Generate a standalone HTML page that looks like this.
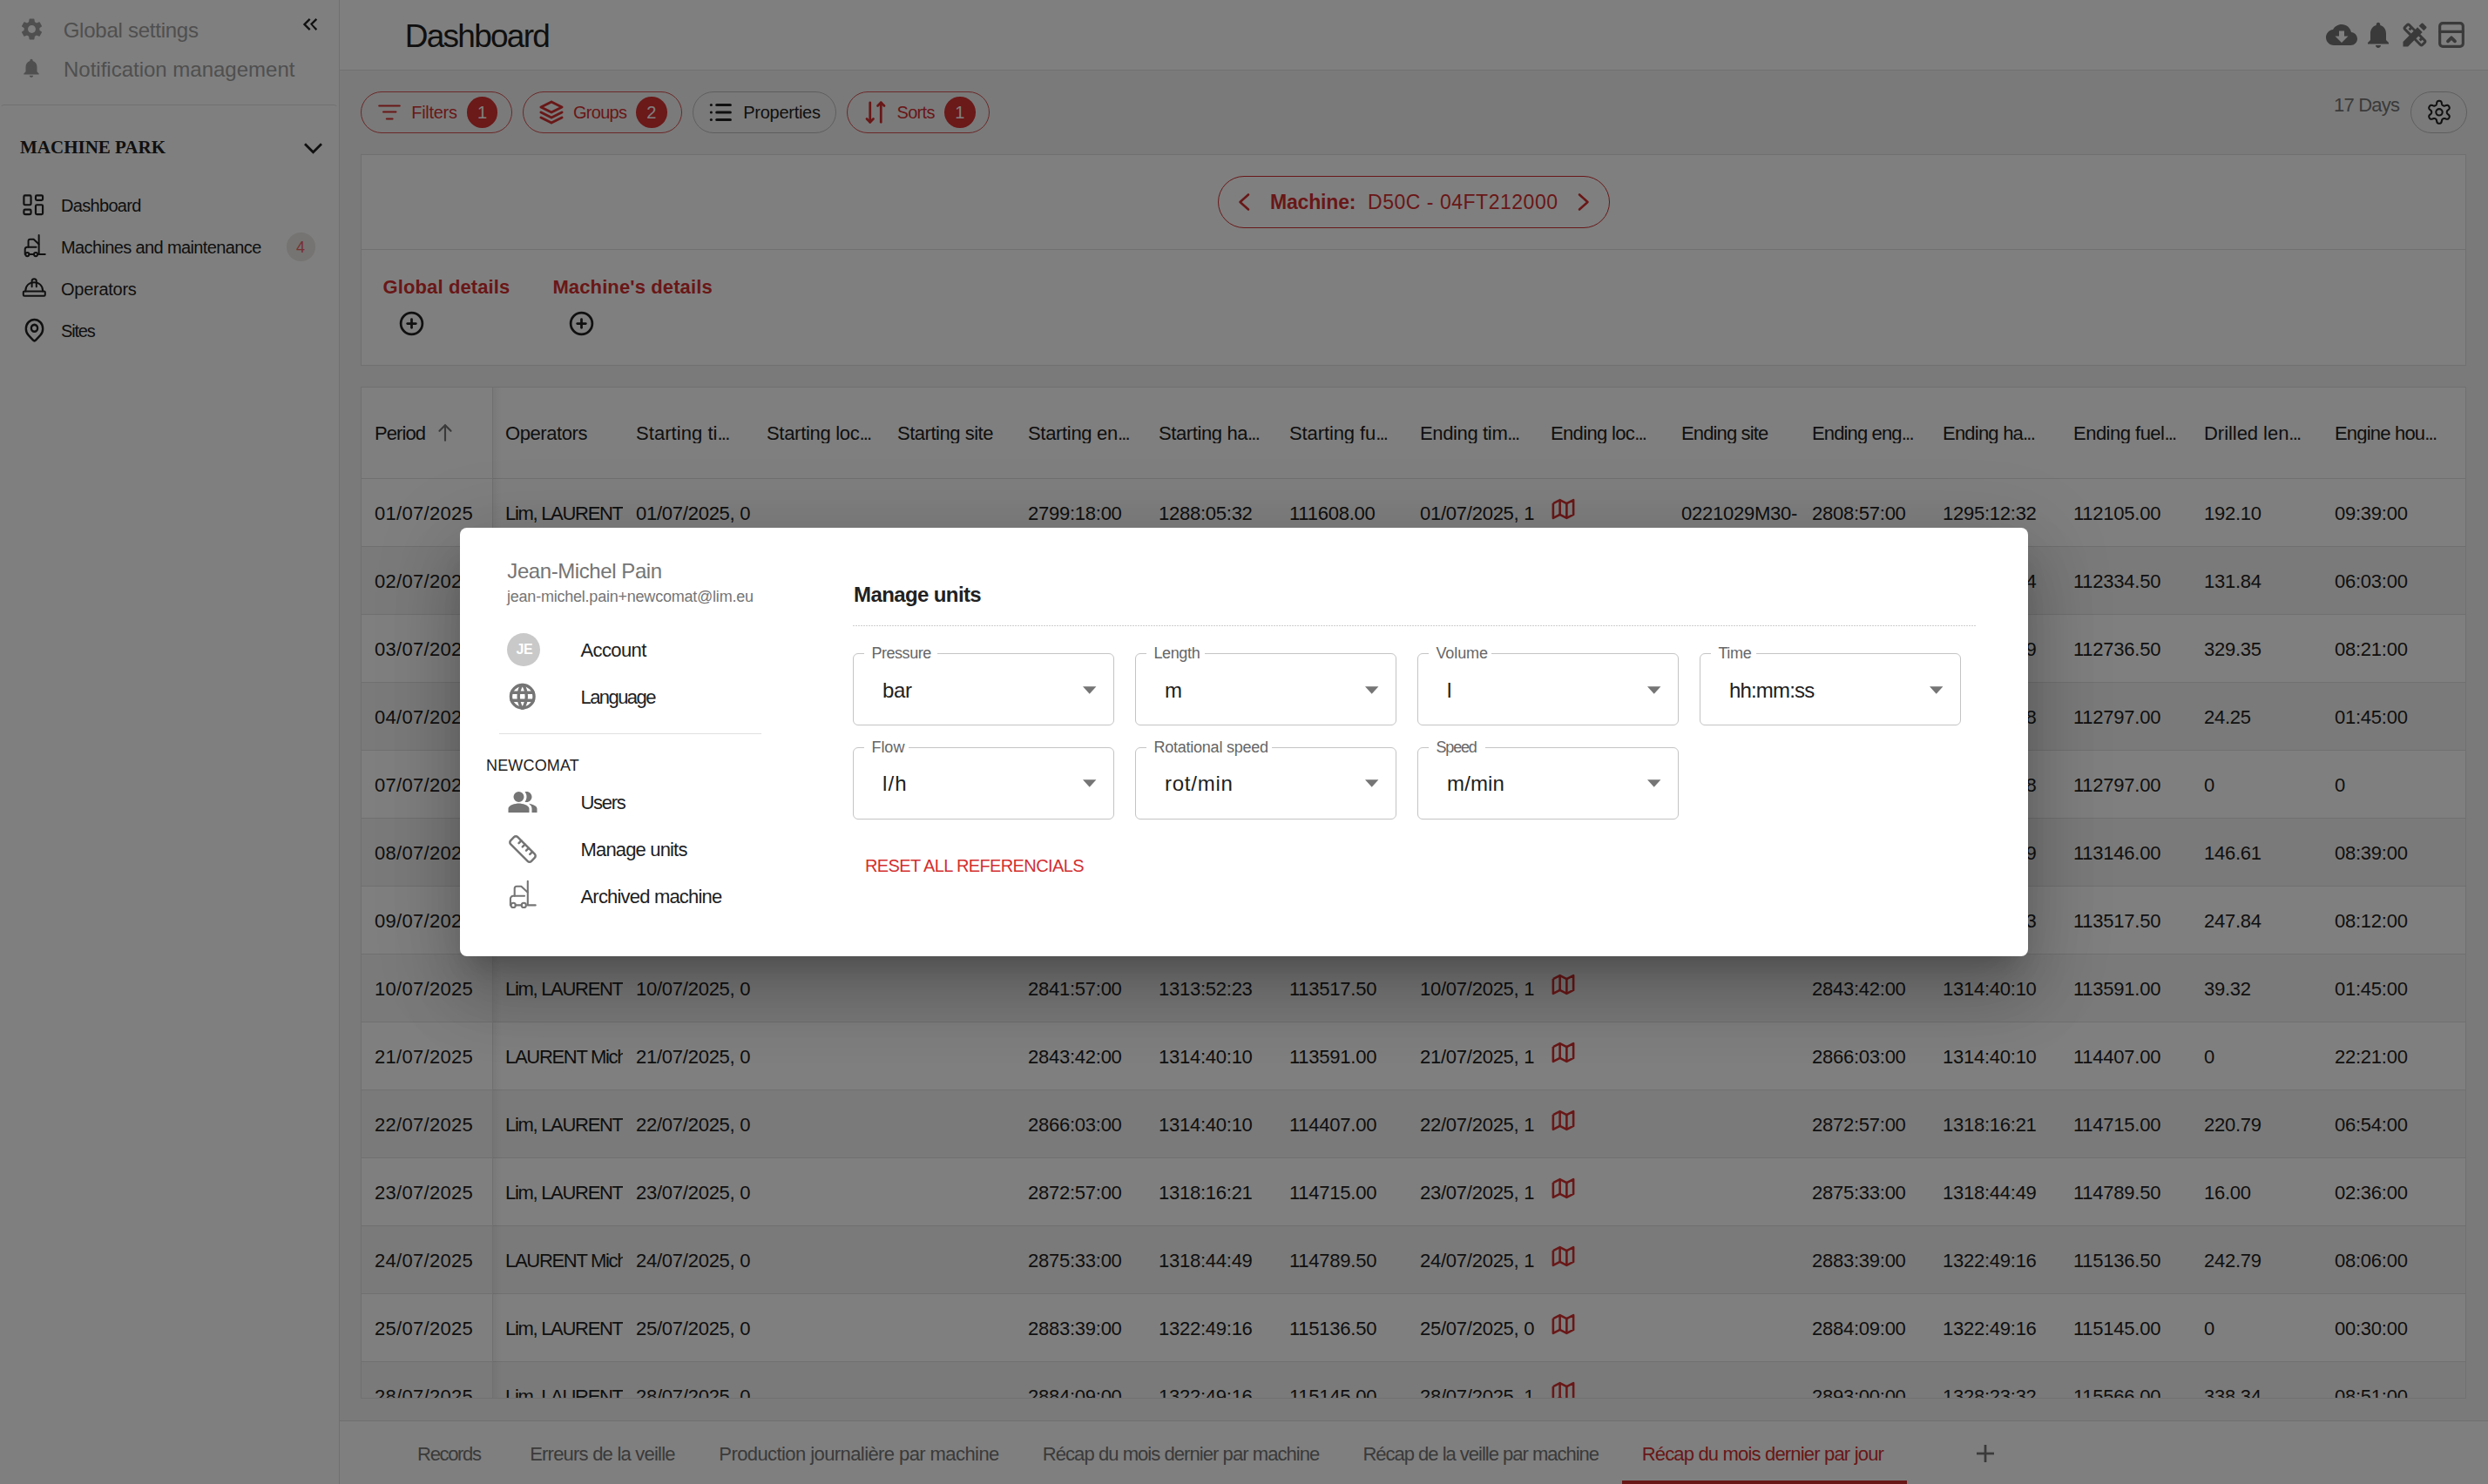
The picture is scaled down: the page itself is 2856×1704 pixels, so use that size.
<!DOCTYPE html>
<html><head><meta charset="utf-8"><title>Dashboard</title>
<style>
html,body{margin:0;padding:0;width:2856px;height:1704px;overflow:hidden;background:#f5f5f5}
body{font-family:"Liberation Sans",sans-serif;}
#root{position:relative;width:2856px;height:1704px;overflow:hidden}
#root div{position:absolute;white-space:nowrap;line-height:1}
#root svg{position:absolute}
</style></head><body><div id="root">
<div style="left:0.0px;top:0.0px;width:2856.0px;height:1704.0px;background:#f5f5f5"></div>
<div style="left:0.0px;top:0.0px;width:389.0px;height:1704.0px;background:#fff"></div>
<div style="left:389.0px;top:0.0px;width:1.0px;height:1704.0px;background:#e0e0e0"></div>
<div style="left:390.0px;top:0.0px;width:2466.0px;height:80.0px;background:#fff"></div>
<div style="left:390.0px;top:80.0px;width:2466.0px;height:1.0px;background:#e0e0e0"></div>
<svg style="position:absolute;left:22.5px;top:19.5px;width:27.0px;height:27.0px;" viewBox="0 0 24 24" ><path fill="#9e9e9e" d="M19.14 12.94c.04-.3.06-.61.06-.94 0-.32-.02-.64-.07-.94l2.03-1.58c.18-.14.23-.41.12-.61l-1.92-3.32c-.12-.22-.37-.29-.59-.22l-2.39.96c-.5-.38-1.03-.7-1.62-.94l-.36-2.54c-.04-.24-.24-.41-.48-.41h-3.84c-.24 0-.43.17-.47.41l-.36 2.54c-.59.24-1.13.57-1.62.94l-2.39-.96c-.22-.08-.47 0-.59.22L2.74 8.87c-.12.21-.08.47.12.61l2.03 1.58c-.05.3-.09.63-.09.94s.02.64.07.94l-2.03 1.58c-.18.14-.23.41-.12.61l1.92 3.32c.12.22.37.29.59.22l2.39-.96c.5.38 1.03.7 1.62.94l.36 2.54c.05.24.24.41.48.41h3.84c.24 0 .44-.17.47-.41l.36-2.54c.59-.24 1.13-.56 1.62-.94l2.39.96c.22.08.47 0 .59-.22l1.92-3.32c.12-.22.07-.47-.12-.61l-2.01-1.58zM12 15.6c-1.98 0-3.6-1.62-3.6-3.6s1.62-3.6 3.6-3.6 3.6 1.62 3.6 3.6-1.62 3.6-3.6 3.6z" transform="translate(-1.2 -1.2) scale(1.1)"/></svg>
<div style="left:72.7px;top:22.7px;font-size:24px;color:#9e9e9e;letter-spacing:-0.248px">Global settings</div>
<svg style="position:absolute;left:23.0px;top:65.0px;width:26.0px;height:26.0px;" viewBox="0 0 24 24" ><path fill="#9e9e9e" d="M12 22c1.1 0 2-.9 2-2h-4c0 1.1.89 2 2 2zm6-6v-5c0-3.07-1.64-5.64-4.5-6.32V4c0-.83-.67-1.5-1.5-1.5s-1.5.67-1.5 1.5v.68C7.63 5.36 6 7.92 6 11v5l-2 2v1h16v-1l-2-2z"/></svg>
<div style="left:73.0px;top:67.7px;font-size:24px;color:#9e9e9e;letter-spacing:-0.004px">Notification management</div>
<svg style="position:absolute;left:341.5px;top:14.0px;width:28.0px;height:28.0px;" viewBox="0 0 24 24" ><path fill="#212121" d="M17.59 18L19 16.59 14.42 12 19 7.41 17.59 6 12 11.59z M11 18l1.41-1.41L7.83 12l4.58-4.59L11 6l-6 6z"/></svg>
<div style="left:0.0px;top:120.0px;width:388.0px;height:60.0px;border:1px solid transparent;border-top-color:#e0e0e0;border-radius:5px 5px 0 0;box-sizing:border-box"></div>
<div style="left:23.0px;top:159.4px;font-size:21px;color:#212121;font-weight:700;font-family:'Liberation Serif',serif">MACHINE PARK</div>
<svg style="position:absolute;left:346.0px;top:156.0px;width:27.0px;height:27.0px;" viewBox="0 0 27 27" ><path fill="none" stroke="#212121" stroke-width="2.8" d="M4 9.2l9.5 9.5 9.5-9.5"/></svg>
<svg style="position:absolute;left:22.2px;top:218.5px;width:32.5px;height:32.5px;" viewBox="0 0 24 24" ><g fill="none" stroke="#212121" stroke-width="1.6" stroke-linecap="round" stroke-linejoin="round"><path d="M5 4h4a1 1 0 0 1 1 1v6a1 1 0 0 1 -1 1h-4a1 1 0 0 1 -1 -1v-6a1 1 0 0 1 1 -1"/><path d="M5 16h4a1 1 0 0 1 1 1v2a1 1 0 0 1 -1 1h-4a1 1 0 0 1 -1 -1v-2a1 1 0 0 1 1 -1"/><path d="M15 12h4a1 1 0 0 1 1 1v6a1 1 0 0 1 -1 1h-4a1 1 0 0 1 -1 -1v-6a1 1 0 0 1 1 -1"/><path d="M15 4h4a1 1 0 0 1 1 1v2a1 1 0 0 1 -1 1h-4a1 1 0 0 1 -1 -1v-2a1 1 0 0 1 1 -1"/></g></svg>
<div style="left:70.0px;top:226.1px;font-size:20px;color:#212121;letter-spacing:-0.680px">Dashboard</div>
<svg style="position:absolute;left:23.5px;top:266.6px;width:32.0px;height:32.0px;" viewBox="0 0 40 40" ><g fill="none" stroke="#212121" stroke-width="2.5" stroke-linecap="round" stroke-linejoin="round"><path d="M25.8 3.7V31.4H34.7"/><circle cx="9.2" cy="31.4" r="2.6"/><circle cx="21.3" cy="31.4" r="2.6"/><path d="M11.8 31.4H18.7"/><path d="M5.9 31.4V24a3.2 3.2 0 0 1 3.2 -3.2H22"/><path d="M10.7 20.8V12.2a2.5 2.5 0 0 1 2.5 -2.5H18.3L25.6 16.5"/></g></svg>
<div style="left:70.0px;top:274.1px;font-size:20px;color:#212121;letter-spacing:-0.622px">Machines and maintenance</div>
<div style="left:329.2px;top:267.2px;width:32.5px;height:32.5px;background:#ebe8e4;border-radius:50%"></div>
<div style="left:340.0px;top:274.8px;font-size:18px;color:#f06060">4</div>
<svg style="position:absolute;left:24.0px;top:314.0px;width:30.0px;height:30.0px;" viewBox="0 0 30 30" ><g fill="none" stroke="#212121" stroke-width="2" stroke-linecap="round" stroke-linejoin="round"><rect x="2.8" y="20.4" width="25" height="5.4" rx="1.2"/><path d="M5.2 20.4C5.2 14 9.5 10.2 15.2 10.2C20.9 10.2 25.2 14 25.2 20.4"/><path d="M12.6 15.2V8.8a2.6 2.6 0 0 1 5.2 0V15.2"/></g></svg>
<div style="left:70.0px;top:321.7px;font-size:20px;color:#212121;letter-spacing:-0.267px">Operators</div>
<svg style="position:absolute;left:24.5px;top:363.0px;width:29.0px;height:31.5px;" viewBox="0 0 24 24" preserveAspectRatio="none"><g fill="none" stroke="#212121" stroke-width="2" stroke-linecap="round" stroke-linejoin="round"><path d="M9 10.5a3 3 0 1 0 6 0a3 3 0 0 0 -6 0"/><path d="M17.657 16.157l-4.243 4.243a2 2 0 0 1 -2.827 0l-4.244 -4.243a8 8 0 1 1 11.314 0z" transform="translate(0 0.5)"/></g></svg>
<div style="left:70.0px;top:369.6px;font-size:20px;color:#212121;letter-spacing:-1.167px">Sites</div>
<div style="left:464.8px;top:23.0px;font-size:37px;color:#212121;letter-spacing:-1.752px">Dashboard</div>
<svg style="position:absolute;left:2670.0px;top:22.0px;width:36.0px;height:36.0px;" viewBox="0 0 24 24" ><path fill="#757575" d="M19.35 10.04C18.67 6.59 15.64 4 12 4 9.11 4 6.6 5.64 5.35 8.04 2.34 8.36 0 10.91 0 14c0 3.31 2.69 6 6 6h13c2.76 0 5-2.24 5-5 0-2.64-2.05-4.78-4.65-4.96zM17 13l-5 5-5-5h3V9h4v4h3z"/></svg>
<svg style="position:absolute;left:2712.0px;top:22.0px;width:36.0px;height:36.0px;" viewBox="0 0 24 24" ><path fill="#757575" d="M12 22c1.1 0 2-.9 2-2h-4c0 1.1.89 2 2 2zm6-6v-5c0-3.07-1.64-5.64-4.5-6.32V4c0-.83-.67-1.5-1.5-1.5s-1.5.67-1.5 1.5v.68C7.63 5.36 6 7.92 6 11v5l-2 2v1h16v-1l-2-2z"/></svg>
<svg style="position:absolute;left:2753.6px;top:22.0px;width:36.0px;height:36.0px;" viewBox="0 0 24 24" ><path fill="#757575" d="M16.24 11.51l1.57-1.57-3.75-3.75-1.57 1.57-4.14-4.13c-.78-.78-2.05-.78-2.83 0l-1.9 1.9c-.78.78-.78 2.05 0 2.83l4.13 4.13L3 17.25V21h3.75l4.76-4.76 4.13 4.13c.95.95 2.23.6 2.83 0l1.9-1.9c.78-.78.78-2.05 0-2.83l-4.13-4.13zm-7.06-.44L5.04 6.94l1.89-1.9L8.2 6.31 7.02 7.5l1.41 1.41 1.19-1.19 1.45 1.45-1.89 1.9zm7.88 7.89l-4.13-4.14 1.9-1.9 1.45 1.45-1.19 1.19 1.41 1.41 1.19-1.19 1.27 1.27-1.9 1.91zM20.71 7.04c.39-.39.39-1.02 0-1.41l-2.34-2.34c-.47-.47-1.12-.29-1.41 0l-1.83 1.83 3.75 3.75 1.83-1.83z"/></svg>
<svg style="position:absolute;left:2794.0px;top:20.0px;width:40.0px;height:40.0px;" viewBox="0 0 24 24" ><g fill="none" stroke="#757575" stroke-width="1.9" stroke-linecap="round" stroke-linejoin="round"><path d="M4 6a2 2 0 0 1 2 -2h12a2 2 0 0 1 2 2v12a2 2 0 0 1 -2 2h-12a2 2 0 0 1 -2 -2z"/><path d="M4 9.8h16"/><path d="M9.6 16.4l2.4 -2.4l2.4 2.4" stroke-width="2.3"/></g></svg>
<div style="left:414.0px;top:105.3px;width:174.0px;height:47.4px;border:1px solid #d65050;border-radius:24px;box-sizing:border-box"></div>
<div style="left:472.3px;top:118.9px;font-size:20px;color:#d32f2f;letter-spacing:-0.292px">Filters</div>
<div style="left:535.8px;top:111.0px;width:35.5px;height:35.5px;background:#d63333;border-radius:50%"></div>
<div style="left:548.0px;top:118.9px;font-size:20px;color:#fff">1</div>
<svg style="position:absolute;left:430.0px;top:112.0px;width:34.0px;height:34.0px;" viewBox="0 0 34 34" ><g fill="none" stroke="#d32f2f" stroke-width="2" stroke-linecap="round"><path d="M5.2 9.4H28.8"/><path d="M10 16.6H24.5"/><path d="M13.8 24.4H20.6"/></g></svg>
<div style="left:600.0px;top:105.3px;width:183.0px;height:47.4px;border:1px solid #d65050;border-radius:24px;box-sizing:border-box"></div>
<div style="left:658.0px;top:118.9px;font-size:20px;color:#d32f2f;letter-spacing:-0.719px">Groups</div>
<div style="left:730.0px;top:111.0px;width:35.5px;height:35.5px;background:#d63333;border-radius:50%"></div>
<div style="left:742.2px;top:118.9px;font-size:20px;color:#fff">2</div>
<svg style="position:absolute;left:615.0px;top:111.0px;width:36.0px;height:36.0px;" viewBox="0 0 24 24" ><g fill="none" stroke="#d32f2f" stroke-width="2" stroke-linecap="round" stroke-linejoin="round"><path d="M12 4l-8 4l8 4l8 -4l-8 -4"/><path d="M4 12l8 4l8 -4"/><path d="M4 16l8 4l8 -4"/></g></svg>
<div style="left:795.0px;top:105.3px;width:165.0px;height:47.4px;border:1px solid #bdbdbd;border-radius:24px;box-sizing:border-box"></div>
<div style="left:853.2px;top:118.9px;font-size:20px;color:#212121;letter-spacing:-0.262px">Properties</div>
<svg style="position:absolute;left:810.0px;top:111.0px;width:34.0px;height:36.0px;" viewBox="0 0 24 24" ><g fill="none" stroke="#212121" stroke-width="2.2" stroke-linecap="round" stroke-linejoin="round"><path d="M9 6h11"/><path d="M9 12h11"/><path d="M9 18h11"/><path d="M4.5 6v.01"/><path d="M4.5 12v.01"/><path d="M4.5 18v.01"/></g></svg>
<div style="left:972.0px;top:105.3px;width:164.0px;height:47.4px;border:1px solid #d65050;border-radius:24px;box-sizing:border-box"></div>
<div style="left:1029.5px;top:118.9px;font-size:20px;color:#d32f2f;letter-spacing:-0.697px">Sorts</div>
<div style="left:1084.0px;top:111.0px;width:35.5px;height:35.5px;background:#d63333;border-radius:50%"></div>
<div style="left:1096.2px;top:118.9px;font-size:20px;color:#fff">1</div>
<svg style="position:absolute;left:989.0px;top:114.0px;width:32.0px;height:30.0px;" viewBox="0 0 24 24" ><g fill="none" stroke="#d32f2f" stroke-width="2.2" stroke-linecap="round" stroke-linejoin="round"><path d="M17 3v18"/><path d="M10 18l-3 3l-3 -3"/><path d="M7 21v-18"/><path d="M20 6l-3 -3l-3 3"/></g></svg>
<div style="left:2679.0px;top:110.4px;font-size:22px;color:#757575;letter-spacing:-0.786px">17 Days</div>
<div style="left:2767.0px;top:105.0px;width:65.0px;height:48.0px;border:1px solid #bdbdbd;border-radius:24px;box-sizing:border-box"></div>
<svg style="position:absolute;left:2780.0px;top:108.0px;width:40.0px;height:40.0px;" viewBox="0 0 40 40" ><g fill="none" stroke="#212121" stroke-width="2.1" stroke-linejoin="round"><path d="M28.80 20.80 L28.80 21.03 L28.82 21.26 L28.84 21.50 L28.89 21.73 L28.97 21.98 L29.11 22.24 L29.33 22.53 L29.64 22.85 L30.06 23.21 L30.53 23.62 L30.99 24.05 L31.36 24.49 L31.61 24.91 L31.74 25.31 L31.78 25.68 L31.75 26.03 L31.67 26.37 L31.56 26.69 L31.42 27.00 L31.26 27.30 L31.08 27.59 L30.88 27.86 L30.66 28.12 L30.40 28.36 L30.11 28.56 L29.77 28.71 L29.36 28.80 L28.88 28.79 L28.31 28.69 L27.71 28.51 L27.12 28.30 L26.60 28.13 L26.16 28.01 L25.81 27.97 L25.51 27.98 L25.25 28.03 L25.02 28.11 L24.81 28.20 L24.60 28.31 L24.40 28.42 L24.20 28.54 L24.01 28.67 L23.82 28.81 L23.64 28.97 L23.46 29.16 L23.31 29.41 L23.17 29.74 L23.05 30.17 L22.94 30.72 L22.82 31.33 L22.67 31.94 L22.48 32.48 L22.24 32.91 L21.97 33.22 L21.66 33.44 L21.34 33.59 L21.01 33.69 L20.68 33.75 L20.34 33.79 L20.00 33.80 L19.66 33.79 L19.32 33.75 L18.99 33.69 L18.66 33.59 L18.34 33.44 L18.03 33.22 L17.76 32.91 L17.52 32.48 L17.33 31.94 L17.18 31.33 L17.06 30.72 L16.95 30.17 L16.83 29.74 L16.69 29.41 L16.54 29.16 L16.36 28.97 L16.18 28.81 L15.99 28.67 L15.80 28.54 L15.60 28.42 L15.40 28.31 L15.19 28.20 L14.98 28.11 L14.75 28.03 L14.49 27.98 L14.19 27.97 L13.84 28.01 L13.40 28.13 L12.88 28.30 L12.29 28.51 L11.69 28.69 L11.12 28.79 L10.64 28.80 L10.23 28.71 L9.89 28.56 L9.60 28.36 L9.34 28.12 L9.12 27.86 L8.92 27.59 L8.74 27.30 L8.58 27.00 L8.44 26.69 L8.33 26.37 L8.25 26.03 L8.22 25.68 L8.26 25.31 L8.39 24.91 L8.64 24.49 L9.01 24.05 L9.47 23.62 L9.94 23.21 L10.36 22.85 L10.67 22.53 L10.89 22.24 L11.03 21.98 L11.11 21.73 L11.16 21.50 L11.18 21.26 L11.20 21.03 L11.20 20.80 L11.20 20.57 L11.18 20.34 L11.16 20.10 L11.11 19.87 L11.03 19.62 L10.89 19.36 L10.67 19.07 L10.36 18.75 L9.94 18.39 L9.47 17.98 L9.01 17.55 L8.64 17.11 L8.39 16.69 L8.26 16.29 L8.22 15.92 L8.25 15.57 L8.33 15.23 L8.44 14.91 L8.58 14.60 L8.74 14.30 L8.92 14.01 L9.12 13.74 L9.34 13.48 L9.60 13.24 L9.89 13.04 L10.23 12.89 L10.64 12.80 L11.12 12.81 L11.69 12.91 L12.29 13.09 L12.88 13.30 L13.40 13.47 L13.84 13.59 L14.19 13.63 L14.49 13.62 L14.75 13.57 L14.98 13.49 L15.19 13.40 L15.40 13.29 L15.60 13.18 L15.80 13.06 L15.99 12.93 L16.18 12.79 L16.36 12.63 L16.54 12.44 L16.69 12.19 L16.83 11.86 L16.95 11.43 L17.06 10.88 L17.18 10.27 L17.33 9.66 L17.52 9.12 L17.76 8.69 L18.03 8.38 L18.34 8.16 L18.66 8.01 L18.99 7.91 L19.32 7.85 L19.66 7.81 L20.00 7.80 L20.34 7.81 L20.68 7.85 L21.01 7.91 L21.34 8.01 L21.66 8.16 L21.97 8.38 L22.24 8.69 L22.48 9.12 L22.67 9.66 L22.82 10.27 L22.94 10.88 L23.05 11.43 L23.17 11.86 L23.31 12.19 L23.46 12.44 L23.64 12.63 L23.82 12.79 L24.01 12.93 L24.20 13.06 L24.40 13.18 L24.60 13.29 L24.81 13.40 L25.02 13.49 L25.25 13.57 L25.51 13.62 L25.81 13.63 L26.16 13.59 L26.60 13.47 L27.12 13.30 L27.71 13.09 L28.31 12.91 L28.88 12.81 L29.36 12.80 L29.77 12.89 L30.11 13.04 L30.40 13.24 L30.66 13.48 L30.88 13.74 L31.08 14.01 L31.26 14.30 L31.42 14.60 L31.56 14.91 L31.67 15.23 L31.75 15.57 L31.78 15.92 L31.74 16.29 L31.61 16.69 L31.36 17.11 L30.99 17.55 L30.53 17.98 L30.06 18.39 L29.64 18.75 L29.33 19.07 L29.11 19.36 L28.97 19.62 L28.89 19.87 L28.84 20.10 L28.82 20.34 L28.80 20.57Z"/><circle cx="20" cy="20.8" r="3.7"/></g></svg>
<div style="left:414.0px;top:177.0px;width:2417.0px;height:243.0px;background:#fff;border:1px solid #e0e0e0;box-sizing:border-box"></div>
<div style="left:415.0px;top:286.0px;width:2415.0px;height:1.0px;background:#e0e0e0"></div>
<div style="left:1398.0px;top:202.0px;width:450.0px;height:60.0px;border:1.5px solid #d32f2f;border-radius:30px;box-sizing:border-box"></div>
<svg style="position:absolute;left:1410.0px;top:210.0px;width:36.0px;height:44.0px;" viewBox="0 0 36 44" ><path fill="none" stroke="#d32f2f" stroke-width="2.6" stroke-linecap="round" stroke-linejoin="round" d="M23 13.5L13.5 22L23 30.5"/></svg>
<svg style="position:absolute;left:1800.0px;top:210.0px;width:36.0px;height:44.0px;" viewBox="0 0 36 44" ><path fill="none" stroke="#d32f2f" stroke-width="2.6" stroke-linecap="round" stroke-linejoin="round" d="M13 13.5L22.5 22L13 30.5"/></svg>
<div style="left:1458.0px;top:220.5px;font-size:23px;color:#d32f2f;font-weight:700;letter-spacing:-0.184px">Machine:</div>
<div style="left:1570.0px;top:220.5px;font-size:23px;color:#d32f2f;letter-spacing:0.520px">D50C - 04FT212000</div>
<div style="left:439.6px;top:318.6px;font-size:22px;color:#d32f2f;font-weight:700;letter-spacing:0.103px">Global details</div>
<div style="left:634.4px;top:318.6px;font-size:22px;color:#d32f2f;font-weight:700;letter-spacing:0.125px">Machine's details</div>
<svg style="position:absolute;left:455.5px;top:354.5px;width:33.0px;height:33.0px;" viewBox="0 0 24 24" ><g fill="none" stroke="#212121" stroke-width="2" stroke-linecap="round"><circle cx="12" cy="12" r="9"/><path d="M8.5 12h7"/><path d="M12 8.5v7"/></g></svg>
<svg style="position:absolute;left:650.5px;top:354.5px;width:33.0px;height:33.0px;" viewBox="0 0 24 24" ><g fill="none" stroke="#212121" stroke-width="2" stroke-linecap="round"><circle cx="12" cy="12" r="9"/><path d="M8.5 12h7"/><path d="M12 8.5v7"/></g></svg>
<div style="left:414px;top:444px;width:2417px;height:1162px;background:#fff;border:1px solid #e0e0e0;box-sizing:border-box;overflow:hidden">
<div style="left:0px;top:104px;width:2417px;height:78px;background:#fff;border-top:1px solid #e0e0e0;box-sizing:border-box"></div>
<div style="left:0px;top:182px;width:2417px;height:78px;background:#f5f5f5;border-top:1px solid #e0e0e0;box-sizing:border-box"></div>
<div style="left:0px;top:260px;width:2417px;height:78px;background:#fff;border-top:1px solid #e0e0e0;box-sizing:border-box"></div>
<div style="left:0px;top:338px;width:2417px;height:78px;background:#f5f5f5;border-top:1px solid #e0e0e0;box-sizing:border-box"></div>
<div style="left:0px;top:416px;width:2417px;height:78px;background:#fff;border-top:1px solid #e0e0e0;box-sizing:border-box"></div>
<div style="left:0px;top:494px;width:2417px;height:78px;background:#f5f5f5;border-top:1px solid #e0e0e0;box-sizing:border-box"></div>
<div style="left:0px;top:572px;width:2417px;height:78px;background:#fff;border-top:1px solid #e0e0e0;box-sizing:border-box"></div>
<div style="left:0px;top:650px;width:2417px;height:78px;background:#f5f5f5;border-top:1px solid #e0e0e0;box-sizing:border-box"></div>
<div style="left:0px;top:728px;width:2417px;height:78px;background:#fff;border-top:1px solid #e0e0e0;box-sizing:border-box"></div>
<div style="left:0px;top:806px;width:2417px;height:78px;background:#f5f5f5;border-top:1px solid #e0e0e0;box-sizing:border-box"></div>
<div style="left:0px;top:884px;width:2417px;height:78px;background:#fff;border-top:1px solid #e0e0e0;box-sizing:border-box"></div>
<div style="left:0px;top:962px;width:2417px;height:78px;background:#f5f5f5;border-top:1px solid #e0e0e0;box-sizing:border-box"></div>
<div style="left:0px;top:1040px;width:2417px;height:78px;background:#fff;border-top:1px solid #e0e0e0;box-sizing:border-box"></div>
<div style="left:0px;top:1118px;width:2417px;height:78px;background:#f5f5f5;border-top:1px solid #e0e0e0;box-sizing:border-box"></div>
<div style="left:15px;top:42.4px;width:135px;font-size:22px;color:#212121;overflow:hidden;letter-spacing:-0.899px">Period</div>
<div style="left:165px;top:42.4px;width:135px;font-size:22px;color:#212121;overflow:hidden;letter-spacing:-0.416px">Operators</div>
<div style="left:315px;top:42.4px;width:135px;font-size:22px;color:#212121;overflow:hidden;letter-spacing:0.057px">Starting ti<span style="letter-spacing:-1.8px">...</span></div>
<div style="left:465px;top:42.4px;width:135px;font-size:22px;color:#212121;overflow:hidden;letter-spacing:-0.300px">Starting loc<span style="letter-spacing:-1.8px">...</span></div>
<div style="left:615px;top:42.4px;width:135px;font-size:22px;color:#212121;overflow:hidden;letter-spacing:-0.473px">Starting site</div>
<div style="left:765px;top:42.4px;width:135px;font-size:22px;color:#212121;overflow:hidden;letter-spacing:-0.322px">Starting en<span style="letter-spacing:-1.8px">...</span></div>
<div style="left:915px;top:42.4px;width:135px;font-size:22px;color:#212121;overflow:hidden;letter-spacing:-0.395px">Starting ha<span style="letter-spacing:-1.8px">...</span></div>
<div style="left:1065px;top:42.4px;width:135px;font-size:22px;color:#212121;overflow:hidden;letter-spacing:-0.102px">Starting fu<span style="letter-spacing:-1.8px">...</span></div>
<div style="left:1215px;top:42.4px;width:135px;font-size:22px;color:#212121;overflow:hidden;letter-spacing:-0.359px">Ending tim<span style="letter-spacing:-1.8px">...</span></div>
<div style="left:1365px;top:42.4px;width:135px;font-size:22px;color:#212121;overflow:hidden;letter-spacing:-0.659px">Ending loc<span style="letter-spacing:-1.8px">...</span></div>
<div style="left:1515px;top:42.4px;width:135px;font-size:22px;color:#212121;overflow:hidden;letter-spacing:-0.866px">Ending site</div>
<div style="left:1665px;top:42.4px;width:135px;font-size:22px;color:#212121;overflow:hidden;letter-spacing:-0.857px">Ending eng<span style="letter-spacing:-1.8px">...</span></div>
<div style="left:1815px;top:42.4px;width:135px;font-size:22px;color:#212121;overflow:hidden;letter-spacing:-0.781px">Ending ha<span style="letter-spacing:-1.8px">...</span></div>
<div style="left:1965px;top:42.4px;width:135px;font-size:22px;color:#212121;overflow:hidden;letter-spacing:-0.512px">Ending fuel<span style="letter-spacing:-1.8px">...</span></div>
<div style="left:2115px;top:42.4px;width:135px;font-size:22px;color:#212121;overflow:hidden;letter-spacing:-0.042px">Drilled len<span style="letter-spacing:-1.8px">...</span></div>
<div style="left:2265px;top:42.4px;width:135px;font-size:22px;color:#212121;overflow:hidden;letter-spacing:-0.807px">Engine hou<span style="letter-spacing:-1.8px">...</span></div>
<svg style="position:absolute;left:83px;top:39px;width:26px;height:26px" viewBox="0 0 24 24"><g fill="none" stroke="#757575" stroke-width="2" stroke-linecap="round" stroke-linejoin="round"><path d="M12 20V4"/><path d="M6 10l6-6 6 6"/></g></svg>
<div style="left:15px;top:133.7px;width:135px;font-size:22px;color:#212121;overflow:hidden;letter-spacing:0.300px">01/07/2025</div>
<div style="left:165px;top:133.7px;width:135px;font-size:22px;color:#212121;overflow:hidden;letter-spacing:-1.300px">Lim, LAURENT</div>
<div style="left:315px;top:133.7px;width:135px;font-size:22px;color:#212121;overflow:hidden;letter-spacing:-0.250px">01/07/2025, 0</div>
<div style="left:765px;top:133.7px;width:135px;font-size:22px;color:#212121;overflow:hidden;letter-spacing:-0.250px">2799:18:00</div>
<div style="left:915px;top:133.7px;width:135px;font-size:22px;color:#212121;overflow:hidden;letter-spacing:-0.250px">1288:05:32</div>
<div style="left:1065px;top:133.7px;width:135px;font-size:22px;color:#212121;overflow:hidden;letter-spacing:-0.250px">111608.00</div>
<div style="left:1215px;top:133.7px;width:135px;font-size:22px;color:#212121;overflow:hidden;letter-spacing:-0.250px">01/07/2025, 1</div>
<svg style="position:absolute;left:1364px;top:124px;width:31px;height:31px" viewBox="0 0 24 24"><g fill="none" stroke="#d32f2f" stroke-width="2" stroke-linejoin="round"><path d="M3 7l6 -3l6 3l6 -3v13l-6 3l-6 -3l-6 3v-13"/><path d="M9 4v13"/><path d="M15 7v13"/></g></svg>
<div style="left:1515px;top:133.7px;width:135px;font-size:22px;color:#212121;overflow:hidden;letter-spacing:-0.250px">0221029M30-</div>
<div style="left:1665px;top:133.7px;width:135px;font-size:22px;color:#212121;overflow:hidden;letter-spacing:-0.250px">2808:57:00</div>
<div style="left:1815px;top:133.7px;width:135px;font-size:22px;color:#212121;overflow:hidden;letter-spacing:-0.250px">1295:12:32</div>
<div style="left:1965px;top:133.7px;width:135px;font-size:22px;color:#212121;overflow:hidden;letter-spacing:-0.250px">112105.00</div>
<div style="left:2115px;top:133.7px;width:135px;font-size:22px;color:#212121;overflow:hidden;letter-spacing:-0.250px">192.10</div>
<div style="left:2265px;top:133.7px;width:135px;font-size:22px;color:#212121;overflow:hidden;letter-spacing:-0.250px">09:39:00</div>
<div style="left:15px;top:211.7px;width:135px;font-size:22px;color:#212121;overflow:hidden;letter-spacing:0.300px">02/07/2025</div>
<div style="left:165px;top:211.7px;width:135px;font-size:22px;color:#212121;overflow:hidden;letter-spacing:-1.300px">Lim, LAURENT</div>
<div style="left:315px;top:211.7px;width:135px;font-size:22px;color:#212121;overflow:hidden;letter-spacing:-0.250px">02/07/2025, 0</div>
<div style="left:765px;top:211.7px;width:135px;font-size:22px;color:#212121;overflow:hidden;letter-spacing:-0.250px">2808:57:00</div>
<div style="left:915px;top:211.7px;width:135px;font-size:22px;color:#212121;overflow:hidden;letter-spacing:-0.250px">1295:12:32</div>
<div style="left:1065px;top:211.7px;width:135px;font-size:22px;color:#212121;overflow:hidden;letter-spacing:-0.250px">112105.00</div>
<div style="left:1215px;top:211.7px;width:135px;font-size:22px;color:#212121;overflow:hidden;letter-spacing:-0.250px">02/07/2025, 1</div>
<svg style="position:absolute;left:1364px;top:202px;width:31px;height:31px" viewBox="0 0 24 24"><g fill="none" stroke="#d32f2f" stroke-width="2" stroke-linejoin="round"><path d="M3 7l6 -3l6 3l6 -3v13l-6 3l-6 -3l-6 3v-13"/><path d="M9 4v13"/><path d="M15 7v13"/></g></svg>
<div style="left:1665px;top:211.7px;width:135px;font-size:22px;color:#212121;overflow:hidden;letter-spacing:-0.250px">2815:00:00</div>
<div style="left:1815px;top:211.7px;width:135px;font-size:22px;color:#212121;overflow:hidden;letter-spacing:-0.250px">1299:40:44</div>
<div style="left:1965px;top:211.7px;width:135px;font-size:22px;color:#212121;overflow:hidden;letter-spacing:-0.250px">112334.50</div>
<div style="left:2115px;top:211.7px;width:135px;font-size:22px;color:#212121;overflow:hidden;letter-spacing:-0.250px">131.84</div>
<div style="left:2265px;top:211.7px;width:135px;font-size:22px;color:#212121;overflow:hidden;letter-spacing:-0.250px">06:03:00</div>
<div style="left:15px;top:289.7px;width:135px;font-size:22px;color:#212121;overflow:hidden;letter-spacing:0.300px">03/07/2025</div>
<div style="left:165px;top:289.7px;width:135px;font-size:22px;color:#212121;overflow:hidden;letter-spacing:-1.300px">Lim, LAURENT</div>
<div style="left:315px;top:289.7px;width:135px;font-size:22px;color:#212121;overflow:hidden;letter-spacing:-0.250px">03/07/2025, 0</div>
<div style="left:765px;top:289.7px;width:135px;font-size:22px;color:#212121;overflow:hidden;letter-spacing:-0.250px">2815:00:00</div>
<div style="left:915px;top:289.7px;width:135px;font-size:22px;color:#212121;overflow:hidden;letter-spacing:-0.250px">1299:40:44</div>
<div style="left:1065px;top:289.7px;width:135px;font-size:22px;color:#212121;overflow:hidden;letter-spacing:-0.250px">112334.50</div>
<div style="left:1215px;top:289.7px;width:135px;font-size:22px;color:#212121;overflow:hidden;letter-spacing:-0.250px">03/07/2025, 1</div>
<svg style="position:absolute;left:1364px;top:280px;width:31px;height:31px" viewBox="0 0 24 24"><g fill="none" stroke="#d32f2f" stroke-width="2" stroke-linejoin="round"><path d="M3 7l6 -3l6 3l6 -3v13l-6 3l-6 -3l-6 3v-13"/><path d="M9 4v13"/><path d="M15 7v13"/></g></svg>
<div style="left:1665px;top:289.7px;width:135px;font-size:22px;color:#212121;overflow:hidden;letter-spacing:-0.250px">2823:21:00</div>
<div style="left:1815px;top:289.7px;width:135px;font-size:22px;color:#212121;overflow:hidden;letter-spacing:-0.250px">1304:55:19</div>
<div style="left:1965px;top:289.7px;width:135px;font-size:22px;color:#212121;overflow:hidden;letter-spacing:-0.250px">112736.50</div>
<div style="left:2115px;top:289.7px;width:135px;font-size:22px;color:#212121;overflow:hidden;letter-spacing:-0.250px">329.35</div>
<div style="left:2265px;top:289.7px;width:135px;font-size:22px;color:#212121;overflow:hidden;letter-spacing:-0.250px">08:21:00</div>
<div style="left:15px;top:367.7px;width:135px;font-size:22px;color:#212121;overflow:hidden;letter-spacing:0.300px">04/07/2025</div>
<div style="left:165px;top:367.7px;width:135px;font-size:22px;color:#212121;overflow:hidden;letter-spacing:-1.300px">Lim, LAURENT</div>
<div style="left:315px;top:367.7px;width:135px;font-size:22px;color:#212121;overflow:hidden;letter-spacing:-0.250px">04/07/2025, 0</div>
<div style="left:765px;top:367.7px;width:135px;font-size:22px;color:#212121;overflow:hidden;letter-spacing:-0.250px">2823:21:00</div>
<div style="left:915px;top:367.7px;width:135px;font-size:22px;color:#212121;overflow:hidden;letter-spacing:-0.250px">1304:55:19</div>
<div style="left:1065px;top:367.7px;width:135px;font-size:22px;color:#212121;overflow:hidden;letter-spacing:-0.250px">112736.50</div>
<div style="left:1215px;top:367.7px;width:135px;font-size:22px;color:#212121;overflow:hidden;letter-spacing:-0.250px">04/07/2025, 1</div>
<svg style="position:absolute;left:1364px;top:358px;width:31px;height:31px" viewBox="0 0 24 24"><g fill="none" stroke="#d32f2f" stroke-width="2" stroke-linejoin="round"><path d="M3 7l6 -3l6 3l6 -3v13l-6 3l-6 -3l-6 3v-13"/><path d="M9 4v13"/><path d="M15 7v13"/></g></svg>
<div style="left:1665px;top:367.7px;width:135px;font-size:22px;color:#212121;overflow:hidden;letter-spacing:-0.250px">2825:06:00</div>
<div style="left:1815px;top:367.7px;width:135px;font-size:22px;color:#212121;overflow:hidden;letter-spacing:-0.250px">1305:40:28</div>
<div style="left:1965px;top:367.7px;width:135px;font-size:22px;color:#212121;overflow:hidden;letter-spacing:-0.250px">112797.00</div>
<div style="left:2115px;top:367.7px;width:135px;font-size:22px;color:#212121;overflow:hidden;letter-spacing:-0.250px">24.25</div>
<div style="left:2265px;top:367.7px;width:135px;font-size:22px;color:#212121;overflow:hidden;letter-spacing:-0.250px">01:45:00</div>
<div style="left:15px;top:445.7px;width:135px;font-size:22px;color:#212121;overflow:hidden;letter-spacing:0.300px">07/07/2025</div>
<div style="left:165px;top:445.7px;width:135px;font-size:22px;color:#212121;overflow:hidden;letter-spacing:-1.300px">Lim, LAURENT</div>
<div style="left:315px;top:445.7px;width:135px;font-size:22px;color:#212121;overflow:hidden;letter-spacing:-0.250px">07/07/2025, 0</div>
<div style="left:765px;top:445.7px;width:135px;font-size:22px;color:#212121;overflow:hidden;letter-spacing:-0.250px">2825:06:00</div>
<div style="left:915px;top:445.7px;width:135px;font-size:22px;color:#212121;overflow:hidden;letter-spacing:-0.250px">1305:40:28</div>
<div style="left:1065px;top:445.7px;width:135px;font-size:22px;color:#212121;overflow:hidden;letter-spacing:-0.250px">112797.00</div>
<div style="left:1215px;top:445.7px;width:135px;font-size:22px;color:#212121;overflow:hidden;letter-spacing:-0.250px">07/07/2025, 1</div>
<svg style="position:absolute;left:1364px;top:436px;width:31px;height:31px" viewBox="0 0 24 24"><g fill="none" stroke="#d32f2f" stroke-width="2" stroke-linejoin="round"><path d="M3 7l6 -3l6 3l6 -3v13l-6 3l-6 -3l-6 3v-13"/><path d="M9 4v13"/><path d="M15 7v13"/></g></svg>
<div style="left:1665px;top:445.7px;width:135px;font-size:22px;color:#212121;overflow:hidden;letter-spacing:-0.250px">2825:06:00</div>
<div style="left:1815px;top:445.7px;width:135px;font-size:22px;color:#212121;overflow:hidden;letter-spacing:-0.250px">1305:40:28</div>
<div style="left:1965px;top:445.7px;width:135px;font-size:22px;color:#212121;overflow:hidden;letter-spacing:-0.250px">112797.00</div>
<div style="left:2115px;top:445.7px;width:135px;font-size:22px;color:#212121;overflow:hidden;letter-spacing:-0.250px">0</div>
<div style="left:2265px;top:445.7px;width:135px;font-size:22px;color:#212121;overflow:hidden;letter-spacing:-0.250px">0</div>
<div style="left:15px;top:523.7px;width:135px;font-size:22px;color:#212121;overflow:hidden;letter-spacing:0.300px">08/07/2025</div>
<div style="left:165px;top:523.7px;width:135px;font-size:22px;color:#212121;overflow:hidden;letter-spacing:-1.300px">Lim, LAURENT</div>
<div style="left:315px;top:523.7px;width:135px;font-size:22px;color:#212121;overflow:hidden;letter-spacing:-0.250px">08/07/2025, 0</div>
<div style="left:765px;top:523.7px;width:135px;font-size:22px;color:#212121;overflow:hidden;letter-spacing:-0.250px">2825:06:00</div>
<div style="left:915px;top:523.7px;width:135px;font-size:22px;color:#212121;overflow:hidden;letter-spacing:-0.250px">1305:40:28</div>
<div style="left:1065px;top:523.7px;width:135px;font-size:22px;color:#212121;overflow:hidden;letter-spacing:-0.250px">112797.00</div>
<div style="left:1215px;top:523.7px;width:135px;font-size:22px;color:#212121;overflow:hidden;letter-spacing:-0.250px">08/07/2025, 1</div>
<svg style="position:absolute;left:1364px;top:514px;width:31px;height:31px" viewBox="0 0 24 24"><g fill="none" stroke="#d32f2f" stroke-width="2" stroke-linejoin="round"><path d="M3 7l6 -3l6 3l6 -3v13l-6 3l-6 -3l-6 3v-13"/><path d="M9 4v13"/><path d="M15 7v13"/></g></svg>
<div style="left:1665px;top:523.7px;width:135px;font-size:22px;color:#212121;overflow:hidden;letter-spacing:-0.250px">2833:45:00</div>
<div style="left:1815px;top:523.7px;width:135px;font-size:22px;color:#212121;overflow:hidden;letter-spacing:-0.250px">1309:27:09</div>
<div style="left:1965px;top:523.7px;width:135px;font-size:22px;color:#212121;overflow:hidden;letter-spacing:-0.250px">113146.00</div>
<div style="left:2115px;top:523.7px;width:135px;font-size:22px;color:#212121;overflow:hidden;letter-spacing:-0.250px">146.61</div>
<div style="left:2265px;top:523.7px;width:135px;font-size:22px;color:#212121;overflow:hidden;letter-spacing:-0.250px">08:39:00</div>
<div style="left:15px;top:601.7px;width:135px;font-size:22px;color:#212121;overflow:hidden;letter-spacing:0.300px">09/07/2025</div>
<div style="left:165px;top:601.7px;width:135px;font-size:22px;color:#212121;overflow:hidden;letter-spacing:-1.300px">Lim, LAURENT</div>
<div style="left:315px;top:601.7px;width:135px;font-size:22px;color:#212121;overflow:hidden;letter-spacing:-0.250px">09/07/2025, 0</div>
<div style="left:765px;top:601.7px;width:135px;font-size:22px;color:#212121;overflow:hidden;letter-spacing:-0.250px">2833:45:00</div>
<div style="left:915px;top:601.7px;width:135px;font-size:22px;color:#212121;overflow:hidden;letter-spacing:-0.250px">1309:27:09</div>
<div style="left:1065px;top:601.7px;width:135px;font-size:22px;color:#212121;overflow:hidden;letter-spacing:-0.250px">113146.00</div>
<div style="left:1215px;top:601.7px;width:135px;font-size:22px;color:#212121;overflow:hidden;letter-spacing:-0.250px">09/07/2025, 1</div>
<svg style="position:absolute;left:1364px;top:592px;width:31px;height:31px" viewBox="0 0 24 24"><g fill="none" stroke="#d32f2f" stroke-width="2" stroke-linejoin="round"><path d="M3 7l6 -3l6 3l6 -3v13l-6 3l-6 -3l-6 3v-13"/><path d="M9 4v13"/><path d="M15 7v13"/></g></svg>
<div style="left:1665px;top:601.7px;width:135px;font-size:22px;color:#212121;overflow:hidden;letter-spacing:-0.250px">2841:57:00</div>
<div style="left:1815px;top:601.7px;width:135px;font-size:22px;color:#212121;overflow:hidden;letter-spacing:-0.250px">1313:52:23</div>
<div style="left:1965px;top:601.7px;width:135px;font-size:22px;color:#212121;overflow:hidden;letter-spacing:-0.250px">113517.50</div>
<div style="left:2115px;top:601.7px;width:135px;font-size:22px;color:#212121;overflow:hidden;letter-spacing:-0.250px">247.84</div>
<div style="left:2265px;top:601.7px;width:135px;font-size:22px;color:#212121;overflow:hidden;letter-spacing:-0.250px">08:12:00</div>
<div style="left:15px;top:679.7px;width:135px;font-size:22px;color:#212121;overflow:hidden;letter-spacing:0.300px">10/07/2025</div>
<div style="left:165px;top:679.7px;width:135px;font-size:22px;color:#212121;overflow:hidden;letter-spacing:-1.300px">Lim, LAURENT</div>
<div style="left:315px;top:679.7px;width:135px;font-size:22px;color:#212121;overflow:hidden;letter-spacing:-0.250px">10/07/2025, 0</div>
<div style="left:765px;top:679.7px;width:135px;font-size:22px;color:#212121;overflow:hidden;letter-spacing:-0.250px">2841:57:00</div>
<div style="left:915px;top:679.7px;width:135px;font-size:22px;color:#212121;overflow:hidden;letter-spacing:-0.250px">1313:52:23</div>
<div style="left:1065px;top:679.7px;width:135px;font-size:22px;color:#212121;overflow:hidden;letter-spacing:-0.250px">113517.50</div>
<div style="left:1215px;top:679.7px;width:135px;font-size:22px;color:#212121;overflow:hidden;letter-spacing:-0.250px">10/07/2025, 1</div>
<svg style="position:absolute;left:1364px;top:670px;width:31px;height:31px" viewBox="0 0 24 24"><g fill="none" stroke="#d32f2f" stroke-width="2" stroke-linejoin="round"><path d="M3 7l6 -3l6 3l6 -3v13l-6 3l-6 -3l-6 3v-13"/><path d="M9 4v13"/><path d="M15 7v13"/></g></svg>
<div style="left:1665px;top:679.7px;width:135px;font-size:22px;color:#212121;overflow:hidden;letter-spacing:-0.250px">2843:42:00</div>
<div style="left:1815px;top:679.7px;width:135px;font-size:22px;color:#212121;overflow:hidden;letter-spacing:-0.250px">1314:40:10</div>
<div style="left:1965px;top:679.7px;width:135px;font-size:22px;color:#212121;overflow:hidden;letter-spacing:-0.250px">113591.00</div>
<div style="left:2115px;top:679.7px;width:135px;font-size:22px;color:#212121;overflow:hidden;letter-spacing:-0.250px">39.32</div>
<div style="left:2265px;top:679.7px;width:135px;font-size:22px;color:#212121;overflow:hidden;letter-spacing:-0.250px">01:45:00</div>
<div style="left:15px;top:757.7px;width:135px;font-size:22px;color:#212121;overflow:hidden;letter-spacing:0.300px">21/07/2025</div>
<div style="left:165px;top:757.7px;width:135px;font-size:22px;color:#212121;overflow:hidden;letter-spacing:-1.300px">LAURENT Michel</div>
<div style="left:315px;top:757.7px;width:135px;font-size:22px;color:#212121;overflow:hidden;letter-spacing:-0.250px">21/07/2025, 0</div>
<div style="left:765px;top:757.7px;width:135px;font-size:22px;color:#212121;overflow:hidden;letter-spacing:-0.250px">2843:42:00</div>
<div style="left:915px;top:757.7px;width:135px;font-size:22px;color:#212121;overflow:hidden;letter-spacing:-0.250px">1314:40:10</div>
<div style="left:1065px;top:757.7px;width:135px;font-size:22px;color:#212121;overflow:hidden;letter-spacing:-0.250px">113591.00</div>
<div style="left:1215px;top:757.7px;width:135px;font-size:22px;color:#212121;overflow:hidden;letter-spacing:-0.250px">21/07/2025, 1</div>
<svg style="position:absolute;left:1364px;top:748px;width:31px;height:31px" viewBox="0 0 24 24"><g fill="none" stroke="#d32f2f" stroke-width="2" stroke-linejoin="round"><path d="M3 7l6 -3l6 3l6 -3v13l-6 3l-6 -3l-6 3v-13"/><path d="M9 4v13"/><path d="M15 7v13"/></g></svg>
<div style="left:1665px;top:757.7px;width:135px;font-size:22px;color:#212121;overflow:hidden;letter-spacing:-0.250px">2866:03:00</div>
<div style="left:1815px;top:757.7px;width:135px;font-size:22px;color:#212121;overflow:hidden;letter-spacing:-0.250px">1314:40:10</div>
<div style="left:1965px;top:757.7px;width:135px;font-size:22px;color:#212121;overflow:hidden;letter-spacing:-0.250px">114407.00</div>
<div style="left:2115px;top:757.7px;width:135px;font-size:22px;color:#212121;overflow:hidden;letter-spacing:-0.250px">0</div>
<div style="left:2265px;top:757.7px;width:135px;font-size:22px;color:#212121;overflow:hidden;letter-spacing:-0.250px">22:21:00</div>
<div style="left:15px;top:835.7px;width:135px;font-size:22px;color:#212121;overflow:hidden;letter-spacing:0.300px">22/07/2025</div>
<div style="left:165px;top:835.7px;width:135px;font-size:22px;color:#212121;overflow:hidden;letter-spacing:-1.300px">Lim, LAURENT</div>
<div style="left:315px;top:835.7px;width:135px;font-size:22px;color:#212121;overflow:hidden;letter-spacing:-0.250px">22/07/2025, 0</div>
<div style="left:765px;top:835.7px;width:135px;font-size:22px;color:#212121;overflow:hidden;letter-spacing:-0.250px">2866:03:00</div>
<div style="left:915px;top:835.7px;width:135px;font-size:22px;color:#212121;overflow:hidden;letter-spacing:-0.250px">1314:40:10</div>
<div style="left:1065px;top:835.7px;width:135px;font-size:22px;color:#212121;overflow:hidden;letter-spacing:-0.250px">114407.00</div>
<div style="left:1215px;top:835.7px;width:135px;font-size:22px;color:#212121;overflow:hidden;letter-spacing:-0.250px">22/07/2025, 1</div>
<svg style="position:absolute;left:1364px;top:826px;width:31px;height:31px" viewBox="0 0 24 24"><g fill="none" stroke="#d32f2f" stroke-width="2" stroke-linejoin="round"><path d="M3 7l6 -3l6 3l6 -3v13l-6 3l-6 -3l-6 3v-13"/><path d="M9 4v13"/><path d="M15 7v13"/></g></svg>
<div style="left:1665px;top:835.7px;width:135px;font-size:22px;color:#212121;overflow:hidden;letter-spacing:-0.250px">2872:57:00</div>
<div style="left:1815px;top:835.7px;width:135px;font-size:22px;color:#212121;overflow:hidden;letter-spacing:-0.250px">1318:16:21</div>
<div style="left:1965px;top:835.7px;width:135px;font-size:22px;color:#212121;overflow:hidden;letter-spacing:-0.250px">114715.00</div>
<div style="left:2115px;top:835.7px;width:135px;font-size:22px;color:#212121;overflow:hidden;letter-spacing:-0.250px">220.79</div>
<div style="left:2265px;top:835.7px;width:135px;font-size:22px;color:#212121;overflow:hidden;letter-spacing:-0.250px">06:54:00</div>
<div style="left:15px;top:913.7px;width:135px;font-size:22px;color:#212121;overflow:hidden;letter-spacing:0.300px">23/07/2025</div>
<div style="left:165px;top:913.7px;width:135px;font-size:22px;color:#212121;overflow:hidden;letter-spacing:-1.300px">Lim, LAURENT</div>
<div style="left:315px;top:913.7px;width:135px;font-size:22px;color:#212121;overflow:hidden;letter-spacing:-0.250px">23/07/2025, 0</div>
<div style="left:765px;top:913.7px;width:135px;font-size:22px;color:#212121;overflow:hidden;letter-spacing:-0.250px">2872:57:00</div>
<div style="left:915px;top:913.7px;width:135px;font-size:22px;color:#212121;overflow:hidden;letter-spacing:-0.250px">1318:16:21</div>
<div style="left:1065px;top:913.7px;width:135px;font-size:22px;color:#212121;overflow:hidden;letter-spacing:-0.250px">114715.00</div>
<div style="left:1215px;top:913.7px;width:135px;font-size:22px;color:#212121;overflow:hidden;letter-spacing:-0.250px">23/07/2025, 1</div>
<svg style="position:absolute;left:1364px;top:904px;width:31px;height:31px" viewBox="0 0 24 24"><g fill="none" stroke="#d32f2f" stroke-width="2" stroke-linejoin="round"><path d="M3 7l6 -3l6 3l6 -3v13l-6 3l-6 -3l-6 3v-13"/><path d="M9 4v13"/><path d="M15 7v13"/></g></svg>
<div style="left:1665px;top:913.7px;width:135px;font-size:22px;color:#212121;overflow:hidden;letter-spacing:-0.250px">2875:33:00</div>
<div style="left:1815px;top:913.7px;width:135px;font-size:22px;color:#212121;overflow:hidden;letter-spacing:-0.250px">1318:44:49</div>
<div style="left:1965px;top:913.7px;width:135px;font-size:22px;color:#212121;overflow:hidden;letter-spacing:-0.250px">114789.50</div>
<div style="left:2115px;top:913.7px;width:135px;font-size:22px;color:#212121;overflow:hidden;letter-spacing:-0.250px">16.00</div>
<div style="left:2265px;top:913.7px;width:135px;font-size:22px;color:#212121;overflow:hidden;letter-spacing:-0.250px">02:36:00</div>
<div style="left:15px;top:991.7px;width:135px;font-size:22px;color:#212121;overflow:hidden;letter-spacing:0.300px">24/07/2025</div>
<div style="left:165px;top:991.7px;width:135px;font-size:22px;color:#212121;overflow:hidden;letter-spacing:-1.300px">LAURENT Michel</div>
<div style="left:315px;top:991.7px;width:135px;font-size:22px;color:#212121;overflow:hidden;letter-spacing:-0.250px">24/07/2025, 0</div>
<div style="left:765px;top:991.7px;width:135px;font-size:22px;color:#212121;overflow:hidden;letter-spacing:-0.250px">2875:33:00</div>
<div style="left:915px;top:991.7px;width:135px;font-size:22px;color:#212121;overflow:hidden;letter-spacing:-0.250px">1318:44:49</div>
<div style="left:1065px;top:991.7px;width:135px;font-size:22px;color:#212121;overflow:hidden;letter-spacing:-0.250px">114789.50</div>
<div style="left:1215px;top:991.7px;width:135px;font-size:22px;color:#212121;overflow:hidden;letter-spacing:-0.250px">24/07/2025, 1</div>
<svg style="position:absolute;left:1364px;top:982px;width:31px;height:31px" viewBox="0 0 24 24"><g fill="none" stroke="#d32f2f" stroke-width="2" stroke-linejoin="round"><path d="M3 7l6 -3l6 3l6 -3v13l-6 3l-6 -3l-6 3v-13"/><path d="M9 4v13"/><path d="M15 7v13"/></g></svg>
<div style="left:1665px;top:991.7px;width:135px;font-size:22px;color:#212121;overflow:hidden;letter-spacing:-0.250px">2883:39:00</div>
<div style="left:1815px;top:991.7px;width:135px;font-size:22px;color:#212121;overflow:hidden;letter-spacing:-0.250px">1322:49:16</div>
<div style="left:1965px;top:991.7px;width:135px;font-size:22px;color:#212121;overflow:hidden;letter-spacing:-0.250px">115136.50</div>
<div style="left:2115px;top:991.7px;width:135px;font-size:22px;color:#212121;overflow:hidden;letter-spacing:-0.250px">242.79</div>
<div style="left:2265px;top:991.7px;width:135px;font-size:22px;color:#212121;overflow:hidden;letter-spacing:-0.250px">08:06:00</div>
<div style="left:15px;top:1069.7px;width:135px;font-size:22px;color:#212121;overflow:hidden;letter-spacing:0.300px">25/07/2025</div>
<div style="left:165px;top:1069.7px;width:135px;font-size:22px;color:#212121;overflow:hidden;letter-spacing:-1.300px">Lim, LAURENT</div>
<div style="left:315px;top:1069.7px;width:135px;font-size:22px;color:#212121;overflow:hidden;letter-spacing:-0.250px">25/07/2025, 0</div>
<div style="left:765px;top:1069.7px;width:135px;font-size:22px;color:#212121;overflow:hidden;letter-spacing:-0.250px">2883:39:00</div>
<div style="left:915px;top:1069.7px;width:135px;font-size:22px;color:#212121;overflow:hidden;letter-spacing:-0.250px">1322:49:16</div>
<div style="left:1065px;top:1069.7px;width:135px;font-size:22px;color:#212121;overflow:hidden;letter-spacing:-0.250px">115136.50</div>
<div style="left:1215px;top:1069.7px;width:135px;font-size:22px;color:#212121;overflow:hidden;letter-spacing:-0.250px">25/07/2025, 0</div>
<svg style="position:absolute;left:1364px;top:1060px;width:31px;height:31px" viewBox="0 0 24 24"><g fill="none" stroke="#d32f2f" stroke-width="2" stroke-linejoin="round"><path d="M3 7l6 -3l6 3l6 -3v13l-6 3l-6 -3l-6 3v-13"/><path d="M9 4v13"/><path d="M15 7v13"/></g></svg>
<div style="left:1665px;top:1069.7px;width:135px;font-size:22px;color:#212121;overflow:hidden;letter-spacing:-0.250px">2884:09:00</div>
<div style="left:1815px;top:1069.7px;width:135px;font-size:22px;color:#212121;overflow:hidden;letter-spacing:-0.250px">1322:49:16</div>
<div style="left:1965px;top:1069.7px;width:135px;font-size:22px;color:#212121;overflow:hidden;letter-spacing:-0.250px">115145.00</div>
<div style="left:2115px;top:1069.7px;width:135px;font-size:22px;color:#212121;overflow:hidden;letter-spacing:-0.250px">0</div>
<div style="left:2265px;top:1069.7px;width:135px;font-size:22px;color:#212121;overflow:hidden;letter-spacing:-0.250px">00:30:00</div>
<div style="left:15px;top:1147.7px;width:135px;font-size:22px;color:#212121;overflow:hidden;letter-spacing:0.300px">28/07/2025</div>
<div style="left:165px;top:1147.7px;width:135px;font-size:22px;color:#212121;overflow:hidden;letter-spacing:-1.300px">Lim, LAURENT</div>
<div style="left:315px;top:1147.7px;width:135px;font-size:22px;color:#212121;overflow:hidden;letter-spacing:-0.250px">28/07/2025, 0</div>
<div style="left:765px;top:1147.7px;width:135px;font-size:22px;color:#212121;overflow:hidden;letter-spacing:-0.250px">2884:09:00</div>
<div style="left:915px;top:1147.7px;width:135px;font-size:22px;color:#212121;overflow:hidden;letter-spacing:-0.250px">1322:49:16</div>
<div style="left:1065px;top:1147.7px;width:135px;font-size:22px;color:#212121;overflow:hidden;letter-spacing:-0.250px">115145.00</div>
<div style="left:1215px;top:1147.7px;width:135px;font-size:22px;color:#212121;overflow:hidden;letter-spacing:-0.250px">28/07/2025, 1</div>
<svg style="position:absolute;left:1364px;top:1138px;width:31px;height:31px" viewBox="0 0 24 24"><g fill="none" stroke="#d32f2f" stroke-width="2" stroke-linejoin="round"><path d="M3 7l6 -3l6 3l6 -3v13l-6 3l-6 -3l-6 3v-13"/><path d="M9 4v13"/><path d="M15 7v13"/></g></svg>
<div style="left:1665px;top:1147.7px;width:135px;font-size:22px;color:#212121;overflow:hidden;letter-spacing:-0.250px">2893:00:00</div>
<div style="left:1815px;top:1147.7px;width:135px;font-size:22px;color:#212121;overflow:hidden;letter-spacing:-0.250px">1328:23:32</div>
<div style="left:1965px;top:1147.7px;width:135px;font-size:22px;color:#212121;overflow:hidden;letter-spacing:-0.250px">115566.00</div>
<div style="left:2115px;top:1147.7px;width:135px;font-size:22px;color:#212121;overflow:hidden;letter-spacing:-0.250px">338.34</div>
<div style="left:2265px;top:1147.7px;width:135px;font-size:22px;color:#212121;overflow:hidden;letter-spacing:-0.250px">08:51:00</div>
<div style="left:150px;top:0px;width:1px;height:1162px;background:#e0e0e0"></div>
<div style="left:151px;top:0px;width:10px;height:1162px;background:linear-gradient(90deg,rgba(0,0,0,0.05),rgba(0,0,0,0))"></div>
</div>
<div style="left:390.0px;top:1631.0px;width:2466.0px;height:73.0px;background:#fff"></div>
<div style="left:390.0px;top:1631.0px;width:2466.0px;height:1.0px;background:#e0e0e0"></div>
<div style="left:479.1px;top:1659.0px;font-size:22px;color:#757575;letter-spacing:-1.354px">Records</div>
<div style="left:608.2px;top:1659.0px;font-size:22px;color:#757575;letter-spacing:-0.784px">Erreurs de la veille</div>
<div style="left:825.3px;top:1659.0px;font-size:22px;color:#757575;letter-spacing:-0.582px">Production journalière par machine</div>
<div style="left:1196.8px;top:1659.0px;font-size:22px;color:#757575;letter-spacing:-0.938px">Récap du mois dernier par machine</div>
<div style="left:1564.4px;top:1659.0px;font-size:22px;color:#757575;letter-spacing:-1.005px">Récap de la veille par machine</div>
<div style="left:1884.7px;top:1659.0px;font-size:22px;color:#d32f2f;letter-spacing:-0.822px">Récap du mois dernier par jour</div>
<div style="left:1862.0px;top:1700.0px;width:327.0px;height:4.0px;background:#d32f2f"></div>
<svg style="position:absolute;left:2264.0px;top:1654.0px;width:30.0px;height:30.0px;" viewBox="0 0 24 24" ><g fill="none" stroke="#757575" stroke-width="2.2" stroke-linecap="butt"><path d="M12 4v16"/><path d="M4 12h16"/></g></svg>
<div style="left:0.0px;top:0.0px;width:2856.0px;height:1704.0px;background:rgba(0,0,0,0.5)"></div>
<div style="left:527.5px;top:605.7px;width:1800.0px;height:492.0px;background:#fff;border-radius:8px;box-shadow:0 22px 30px -14px rgba(0,0,0,.2),0 48px 76px 6px rgba(0,0,0,.14),0 18px 92px 16px rgba(0,0,0,.12)"></div>
<div style="left:582.3px;top:643.7px;font-size:24px;color:#757575;letter-spacing:-0.420px">Jean-Michel Pain</div>
<div style="left:582.0px;top:675.8px;font-size:18px;color:#757575;letter-spacing:-0.223px">jean-michel.pain+newcomat@lim.eu</div>
<div style="left:582.0px;top:727.0px;width:38.0px;height:38.0px;background:#c9c9c9;border-radius:50%"></div>
<div style="left:592.5px;top:738.2px;font-size:16px;color:#fff;letter-spacing:-0.3px;font-weight:700">JE</div>
<div style="left:666.5px;top:736.4px;font-size:22px;color:#212121;letter-spacing:-0.617px">Account</div>
<svg style="position:absolute;left:582.2px;top:782.1px;width:35.5px;height:35.5px;" viewBox="0 0 24 24" ><g fill="none" stroke="#757575" stroke-width="2.3" stroke-linecap="round" stroke-linejoin="round"><path d="M3 12a9 9 0 1 0 18 0a9 9 0 0 0 -18 0"/><path d="M3.6 9h16.8"/><path d="M3.6 15h16.8"/><path d="M11.5 3a17 17 0 0 0 0 18"/><path d="M12.5 3a17 17 0 0 1 0 18"/></g></svg>
<div style="left:666.5px;top:790.4px;font-size:22px;color:#212121;letter-spacing:-1.570px">Language</div>
<div style="left:573.0px;top:842.0px;width:301.0px;height:1.0px;background:#e0e0e0"></div>
<div style="left:558.0px;top:869.8px;font-size:18px;color:#212121;letter-spacing:0.163px">NEWCOMAT</div>
<svg style="position:absolute;left:582.0px;top:903.0px;width:36.0px;height:36.0px;" viewBox="0 0 24 24" ><path fill="#757575" d="M16.67 13.13C18.04 14.06 19 15.32 19 17v3h4v-3c0-2.18-3.57-3.47-6.33-3.87z M9 12a4 4 0 1 0 0 -8a4 4 0 0 0 0 8z M15 12c2.21 0 4-1.79 4-4s-1.79-4-4-4c-.47 0-.91.1-1.33.24C14.5 5.27 15 6.58 15 8s-.5 2.73-1.33 3.76c.42.14.86.24 1.33.24z M9 13c-2.67 0-8 1.34-8 4v3h16v-3c0-2.66-5.33-4-8-4z"/></svg>
<div style="left:666.5px;top:910.8px;font-size:22px;color:#212121;letter-spacing:-1.313px">Users</div>
<svg style="position:absolute;left:580.0px;top:954.7px;width:40.0px;height:40.0px;" viewBox="0 0 40 40" ><g fill="none" stroke="#757575" stroke-width="2.5" stroke-linecap="round" stroke-linejoin="round" transform="rotate(45 20 20)"><rect x="3.2" y="14.3" width="33.6" height="11.4" rx="3"/><path d="M12 14.3v4"/><path d="M18 14.3v4"/><path d="M24 14.3v4"/><path d="M30 14.3v4"/></g></svg>
<div style="left:666.5px;top:965.4px;font-size:22px;color:#212121;letter-spacing:-0.836px">Manage units</div>
<svg style="position:absolute;left:580.0px;top:1008.0px;width:40.0px;height:40.0px;" viewBox="0 0 40 40" ><g fill="none" stroke="#757575" stroke-width="2.1" stroke-linecap="round" stroke-linejoin="round"><path d="M25.8 3.7V31.4H34.7"/><circle cx="9.2" cy="31.4" r="2.6"/><circle cx="21.3" cy="31.4" r="2.6"/><path d="M11.8 31.4H18.7"/><path d="M5.9 31.4V24a3.2 3.2 0 0 1 3.2 -3.2H22"/><path d="M10.7 20.8V12.2a2.5 2.5 0 0 1 2.5 -2.5H18.3L25.6 16.5"/></g></svg>
<div style="left:666.5px;top:1019.4px;font-size:22px;color:#212121;letter-spacing:-0.812px">Archived machine</div>
<div style="left:980.0px;top:670.7px;font-size:24px;color:#212121;font-weight:700;letter-spacing:-0.605px">Manage units</div>
<div style="left:979.0px;top:718.0px;width:1289.0px;height:1.0px;background:repeating-linear-gradient(90deg,#cfcfcf 0 2px,transparent 2px 3px)"></div>
<div style="left:979.0px;top:750.4px;width:299.5px;height:83.0px;border:1.3px solid #c4c4c4;border-radius:6px;box-sizing:border-box"></div>
<div style="left:992px;top:747.4px;height:6px;background:#fff;padding:0 8px 0 6px;font-size:18px;line-height:6px;color:transparent;letter-spacing:-0.3px;white-space:nowrap">Pressure</div>
<div style="left:1000.4px;top:741.2px;font-size:18px;color:#666;letter-spacing:-0.447px">Pressure</div>
<div style="left:1013.0px;top:780.7px;font-size:24px;color:#212121;letter-spacing:-0.394px">bar</div>
<svg style="position:absolute;left:1243.0px;top:787.6px;width:30.0px;height:10.0px;" viewBox="0 0 30 10" ><path fill="#757575" d="M0 0.3h15.4l-7.7 8.4z" transform="translate(0 0)"/></svg>
<div style="left:1303.0px;top:750.4px;width:299.5px;height:83.0px;border:1.3px solid #c4c4c4;border-radius:6px;box-sizing:border-box"></div>
<div style="left:1316px;top:747.4px;height:6px;background:#fff;padding:0 8px 0 6px;font-size:18px;line-height:6px;color:transparent;letter-spacing:-0.3px;white-space:nowrap">Length</div>
<div style="left:1324.4px;top:741.2px;font-size:18px;color:#666;letter-spacing:-0.353px">Length</div>
<div style="left:1337.0px;top:780.7px;font-size:24px;color:#212121;letter-spacing:-1.100px">m</div>
<svg style="position:absolute;left:1567.0px;top:787.6px;width:30.0px;height:10.0px;" viewBox="0 0 30 10" ><path fill="#757575" d="M0 0.3h15.4l-7.7 8.4z" transform="translate(0 0)"/></svg>
<div style="left:1627.0px;top:750.4px;width:299.5px;height:83.0px;border:1.3px solid #c4c4c4;border-radius:6px;box-sizing:border-box"></div>
<div style="left:1640px;top:747.4px;height:6px;background:#fff;padding:0 8px 0 6px;font-size:18px;line-height:6px;color:transparent;letter-spacing:-0.3px;white-space:nowrap">Volume</div>
<div style="left:1648.4px;top:741.2px;font-size:18px;color:#666;letter-spacing:-0.089px">Volume</div>
<div style="left:1661.0px;top:780.7px;font-size:24px;color:#212121;letter-spacing:-0.3px">l</div>
<svg style="position:absolute;left:1891.0px;top:787.6px;width:30.0px;height:10.0px;" viewBox="0 0 30 10" ><path fill="#757575" d="M0 0.3h15.4l-7.7 8.4z" transform="translate(0 0)"/></svg>
<div style="left:1951.0px;top:750.4px;width:299.5px;height:83.0px;border:1.3px solid #c4c4c4;border-radius:6px;box-sizing:border-box"></div>
<div style="left:1964px;top:747.4px;height:6px;background:#fff;padding:0 8px 0 6px;font-size:18px;line-height:6px;color:transparent;letter-spacing:-0.3px;white-space:nowrap">Time</div>
<div style="left:1972.4px;top:741.2px;font-size:18px;color:#666;letter-spacing:-0.348px">Time</div>
<div style="left:1985.0px;top:780.7px;font-size:24px;color:#212121;letter-spacing:-0.831px">hh:mm:ss</div>
<svg style="position:absolute;left:2215.0px;top:787.6px;width:30.0px;height:10.0px;" viewBox="0 0 30 10" ><path fill="#757575" d="M0 0.3h15.4l-7.7 8.4z" transform="translate(0 0)"/></svg>
<div style="left:979.0px;top:858.0px;width:299.5px;height:83.0px;border:1.3px solid #c4c4c4;border-radius:6px;box-sizing:border-box"></div>
<div style="left:992px;top:855px;height:6px;background:#fff;padding:0 8px 0 6px;font-size:18px;line-height:6px;color:transparent;letter-spacing:-0.3px;white-space:nowrap">Flow</div>
<div style="left:1000.4px;top:848.8px;font-size:18px;color:#666;letter-spacing:-0.005px">Flow</div>
<div style="left:1013.0px;top:888.3px;font-size:24px;color:#212121;letter-spacing:1.120px">l/h</div>
<svg style="position:absolute;left:1243.0px;top:895.2px;width:30.0px;height:10.0px;" viewBox="0 0 30 10" ><path fill="#757575" d="M0 0.3h15.4l-7.7 8.4z" transform="translate(0 0)"/></svg>
<div style="left:1303.0px;top:858.0px;width:299.5px;height:83.0px;border:1.3px solid #c4c4c4;border-radius:6px;box-sizing:border-box"></div>
<div style="left:1316px;top:855px;height:6px;background:#fff;padding:0 8px 0 6px;font-size:18px;line-height:6px;color:transparent;letter-spacing:-0.3px;white-space:nowrap">Rotational speed</div>
<div style="left:1324.4px;top:848.8px;font-size:18px;color:#666;letter-spacing:-0.227px">Rotational speed</div>
<div style="left:1337.0px;top:888.3px;font-size:24px;color:#212121;letter-spacing:0.757px">rot/min</div>
<svg style="position:absolute;left:1567.0px;top:895.2px;width:30.0px;height:10.0px;" viewBox="0 0 30 10" ><path fill="#757575" d="M0 0.3h15.4l-7.7 8.4z" transform="translate(0 0)"/></svg>
<div style="left:1627.0px;top:858.0px;width:299.5px;height:83.0px;border:1.3px solid #c4c4c4;border-radius:6px;box-sizing:border-box"></div>
<div style="left:1640px;top:855px;height:6px;background:#fff;padding:0 8px 0 6px;font-size:18px;line-height:6px;color:transparent;letter-spacing:-0.3px;white-space:nowrap">Speed</div>
<div style="left:1648.4px;top:848.8px;font-size:18px;color:#666;letter-spacing:-1.141px">Speed</div>
<div style="left:1661.0px;top:888.3px;font-size:24px;color:#212121;letter-spacing:0.139px">m/min</div>
<svg style="position:absolute;left:1891.0px;top:895.2px;width:30.0px;height:10.0px;" viewBox="0 0 30 10" ><path fill="#757575" d="M0 0.3h15.4l-7.7 8.4z" transform="translate(0 0)"/></svg>
<div style="left:992.9px;top:983.7px;font-size:20px;color:#d32f2f;letter-spacing:-0.617px">RESET ALL REFERENCIALS</div>
</div></body></html>
